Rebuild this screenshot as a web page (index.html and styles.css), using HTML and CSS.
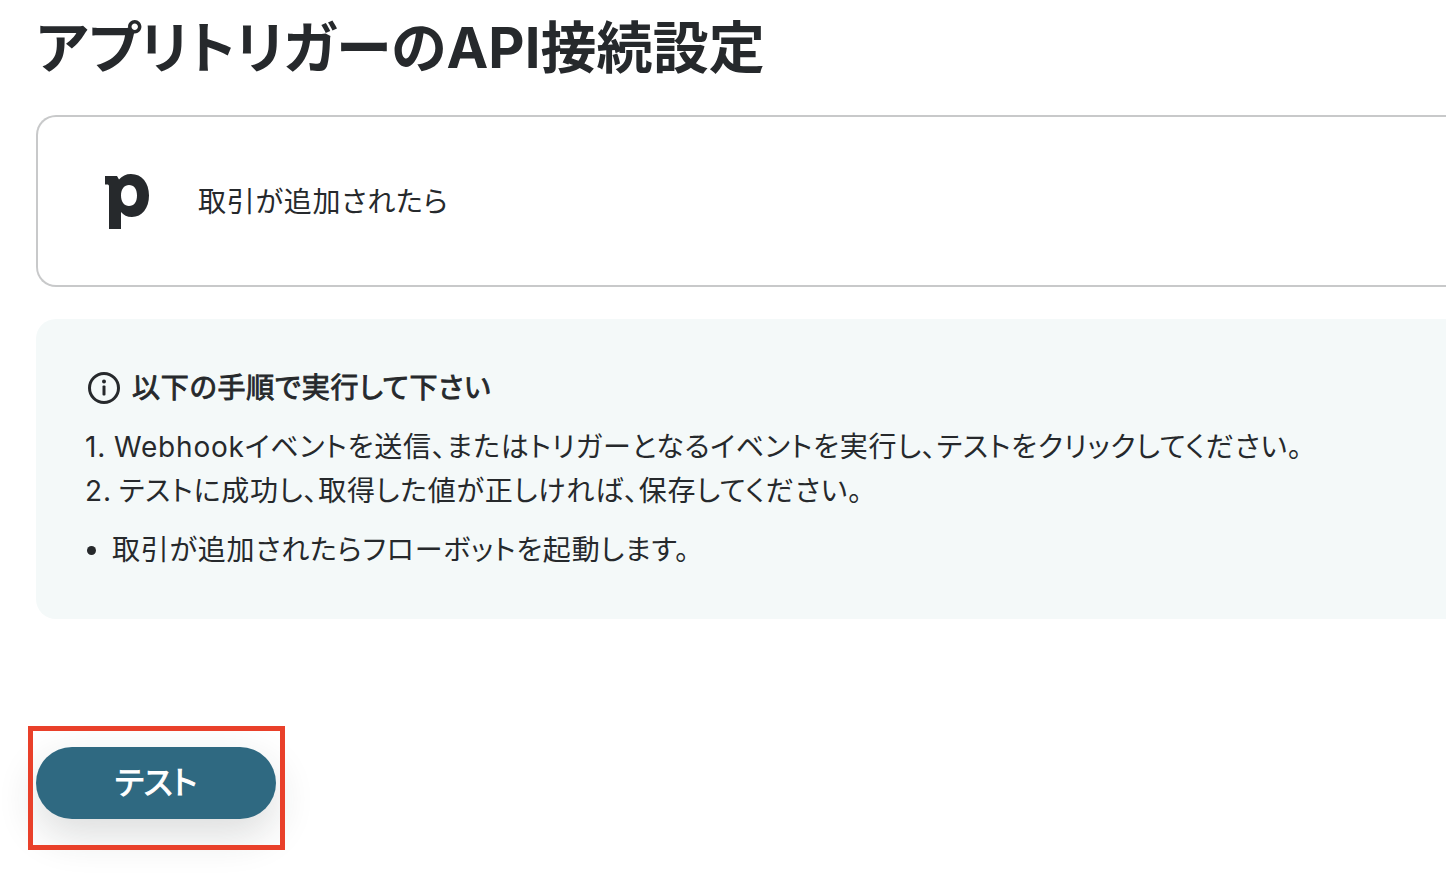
FILE: index.html
```html
<!DOCTYPE html>
<html lang="ja">
<head>
  <meta charset="UTF-8" />
  <title>アプリトリガーのAPI接続設定</title>
  <link rel="stylesheet" href="styles.css">
</head>
<body>
  <div class="page">
    <h1>アプリトリガーのAPI接続設定</h1>

    <!-- Trigger card -->
    <div class="trigger-card">
      <svg class="logo" width="46" height="58" viewBox="0 0 46 58">
        <path fill="#26292c" fill-rule="evenodd" d="M1 3H13L15 6.500C18 3 22 1 27 1C38 1 45 10 45 22.500C45 35 38 44 28 44C23 44 19.500 42 17 39V56H5V13.500C5 12 4.500 11.500 3 11.500H1ZM17 22.500C17 29 20.500 33 25 33C30 33 33 29 33 22.500C33 16 30 12 25 12C20.500 12 17 16 17 22.500Z"/>
      </svg>
      <span class="trigger-name">取引が追加されたら</span>
    </div>

    <!-- Instructions -->
    <div class="guide">
      <div class="guide-title">
        <svg class="info-icon" width="34" height="34" viewBox="0 0 34 34">
          <circle cx="17" cy="17" r="14.500" fill="none" stroke="#26292c" stroke-width="3"/>
          <circle cx="17" cy="10.500" r="2" fill="#26292c"/>
          <rect x="15.500" y="14.500" width="3" height="10" rx="1" fill="#26292c"/>
        </svg>
        <span>以下の手順で実行して下さい</span>
      </div>
      <ol class="steps">
        <li>Webhookイベントを送信、またはトリガーとなるイベントを実行し、テストをクリックしてください。</li>
        <li>テストに成功し、取得した値が正しければ、保存してください。</li>
      </ol>
      <ul class="notes">
        <li>取引が追加されたらフローボットを起動します。</li>
      </ul>
    </div>

    <div class="actions">
      <button class="test-btn">テスト</button>
      <div class="highlight"></div>
    </div>
  </div>
</body>
</html>
```

FILE: styles.css
```css
html, body {
  margin: 0;
  height: 100%;
  overflow: hidden;
  background: #fff;
}
body {
  font-family: Inter, "Noto Sans CJK JP", sans-serif;
  font-feature-settings: "palt";
  color: #26292c;
}
.page {
  padding: 0 0 0 36px;
}
h1 {
  margin: 0;
  height: 115px;
  padding-top: 12px;
  box-sizing: border-box;
  font-size: 56px;
  line-height: 72px;
  font-weight: 700;
  letter-spacing: 0.1px;
}
.trigger-card {
  display: flex;
  align-items: center;
  height: 172px;
  box-sizing: border-box;
  border: 2px solid #c8c9ca;
  border-right: 0;
  border-radius: 20px 0 0 20px;
  padding-left: 66px;
}
.logo {
  margin-right: 49px;
  margin-top: 2px;
}
.trigger-name {
  font-size: 28px;
  letter-spacing: 0.8px;
  margin-top: -3px;
  margin-left: -1px;
}
.guide {
  margin-top: 32px;
  height: 300px;
  box-sizing: border-box;
  background: #f4f9f9;
  border-radius: 20px 0 0 20px;
  padding: 52px 0 0 49px;
}
.guide-title {
  display: flex;
  align-items: center;
  gap: 11px;
  margin-left: 2px;
  font-size: 28px;
  font-weight: 400;
  -webkit-text-stroke: 0.9px #26292c;
  line-height: 34px;
  letter-spacing: 0.8px;
}
.steps {
  margin: 20px 0 0;
  padding: 0;
  list-style: none;
  font-size: 28px;
  line-height: 44px;
  letter-spacing: 0.8px;
}
.steps li::before {
  content: counter(list-item) ".";
  display: inline-block;
  width: 34px;
}
.steps li:first-child::before {
  width: 29px;
}
.notes {
  margin: 15px 0 0;
  padding: 0 0 0 27px;
  font-size: 28px;
  line-height: 44px;
  letter-spacing: 0.8px;
}
.actions {
  position: relative;
  margin-top: 128px;
  width: 240px;
}
.test-btn {
  display: block;
  width: 240px;
  height: 72px;
  padding: 0 0 6px;
  border: 0;
  border-radius: 36px;
  background: #2f6981;
  color: #fff;
  font-family: inherit;
  font-feature-settings: inherit;
  font-size: 32px;
  font-weight: 400;
  -webkit-text-stroke: 1px #fff;
  box-shadow: 0 16px 40px rgba(38, 41, 44, 0.16);
}
.highlight {
  position: absolute;
  left: -8px;
  top: -21px;
  width: 257px;
  height: 124px;
  box-sizing: border-box;
  border: 5px solid #e9402a;
}
```
